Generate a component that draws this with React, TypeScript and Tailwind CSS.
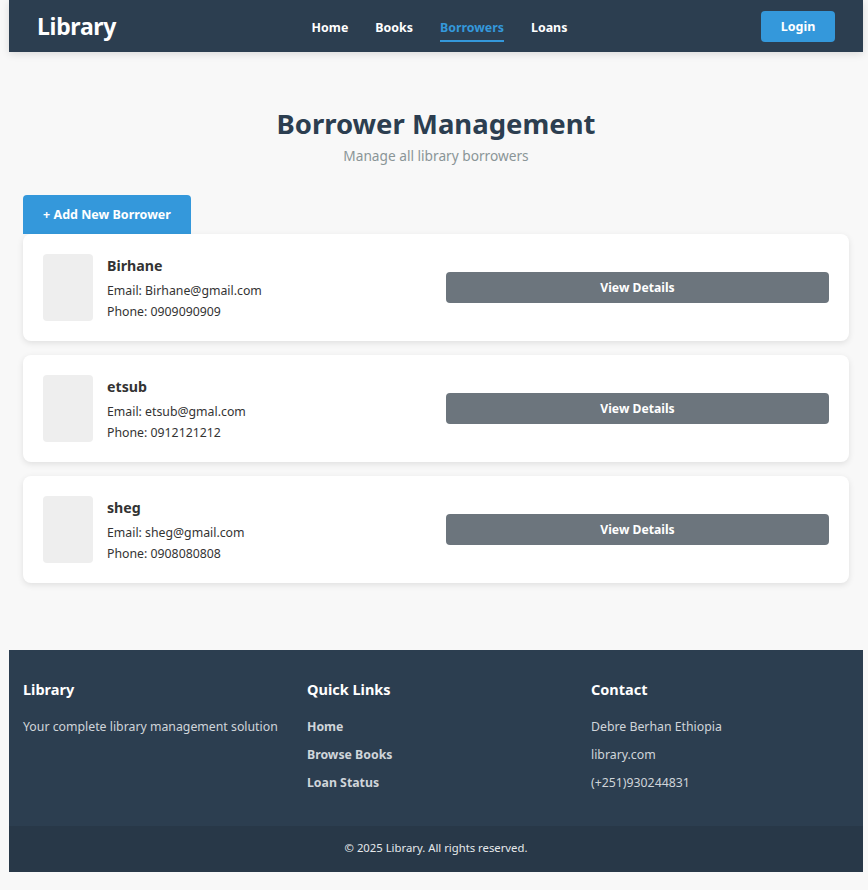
const borrowers = [
  { name: 'Birhane', email: 'Birhane@gmail.com', phone: '0909090909' },
  { name: 'etsub', email: 'etsub@gmal.com', phone: '0912121212' },
  { name: 'sheg', email: 'sheg@gmail.com', phone: '0908080808' },
];

const navLinks = ['Home', 'Books', 'Borrowers', 'Loans'];

export default function App() {
  return (
    <div
      className="min-h-screen bg-[#f8f8f8] pl-[9px] pr-[5px] pb-[18px]"
      style={{ fontFamily: '"Noto Sans", "Open Sans", sans-serif' }}
    >
      {/* Header */}
      <header className="h-[52px] bg-[#2c3e50] shadow-[0_2px_8px_rgba(0,0,0,0.12)] flex items-center px-[28px]">
        <div className="flex-1 text-white text-[23px] font-bold tracking-[-0.3px]">Library</div>
        <nav className="flex items-center gap-[27px] ml-[7px]">
          {navLinks.map((l) => (
            <a
              key={l}
              className={`text-[12.4px] font-bold pb-[2px] border-b-2 mt-[9px] ${l === 'Borrowers' ? 'text-[#3498db] border-[#3498db]' : 'text-white border-transparent'}`}
            >
              {l}
            </a>
          ))}
        </nav>
        <div className="flex-1 flex justify-end">
          <button className="bg-[#3498db] text-white text-[12.5px] font-bold rounded-[4px] w-[74px] h-[31px] mt-[1px] pt-[2px]">Login</button>
        </div>
      </header>

      {/* Main */}
      <main className="px-[14px] pt-[52px]">
        <div className="text-center">
          <h1 className="text-[27.5px] font-bold text-[#2c3e50] leading-[40px]">Borrower Management</h1>
          <p className="text-[13.7px] text-[#8a9597] mt-[2px]">Manage all library borrowers</p>
        </div>

        <button className="mt-[28px] w-[168px] h-[39px] pt-[2px] bg-[#3498db] text-white text-[12.5px] font-bold rounded-t-[4px]">
          + Add New Borrower
        </button>

        <div className="flex flex-col gap-[14px]">
          {borrowers.map((b) => (
            <div
              key={b.name}
              className="bg-white rounded-[8px] shadow-[0_2px_6px_rgba(0,0,0,0.1)] h-[107px] flex items-center px-[20px]"
            >
              <div className="w-[50px] h-[67px] bg-[#eeeeee] rounded-[4px] shrink-0" />
              <div className="ml-[14px] flex-1 text-[#333]">
                <div className="text-[14.2px] font-bold leading-[20px] mt-[4px]">{b.name}</div>
                <div className="text-[12.3px] leading-[21px] mt-[4px]">Email: {b.email}</div>
                <div className="text-[12.3px] leading-[21px]">Phone: {b.phone}</div>
              </div>
              <button className="w-[383px] h-[31px] pt-[3px] bg-[#6c757d] text-white text-[12.2px] font-bold rounded-[4px]">
                View Details
              </button>
            </div>
          ))}
        </div>
      </main>

      {/* Footer */}
      <footer className="mt-[67px] bg-[#2c3e50]">
        <div className="px-[14px] pt-[28px] pb-[34px] grid grid-cols-3 gap-[26px]">
          <div>
            <h3 className="text-white text-[14.5px] font-bold leading-[22px]">Library</h3>
            <p className="text-[#d0d5da] text-[12.3px] leading-[19px] mt-[17px] whitespace-nowrap">Your complete library management solution</p>
          </div>
          <div>
            <h3 className="text-white text-[14.5px] font-bold leading-[22px]">Quick Links</h3>
            <ul className="mt-[17px] flex flex-col gap-[9px]">
              {['Home', 'Browse Books', 'Loan Status'].map((l) => (
                <li key={l} className="text-[#d0d5da] text-[12.3px] font-bold leading-[19px]">{l}</li>
              ))}
            </ul>
          </div>
          <div>
            <h3 className="text-white text-[14.5px] font-bold leading-[22px]">Contact</h3>
            <ul className="mt-[17px] flex flex-col gap-[9px]">
              {['Debre Berhan Ethiopia', 'library.com', '(+251)930244831'].map((l) => (
                <li key={l} className="text-[#d0d5da] text-[12.3px] leading-[19px]">{l}</li>
              ))}
            </ul>
          </div>
        </div>
        <div className="bg-[#283848] h-[46px] flex items-center justify-center text-[#e5e8eb] text-[11.3px]">
          © 2025 Library. All rights reserved.
        </div>
      </footer>
    </div>
  );
}
